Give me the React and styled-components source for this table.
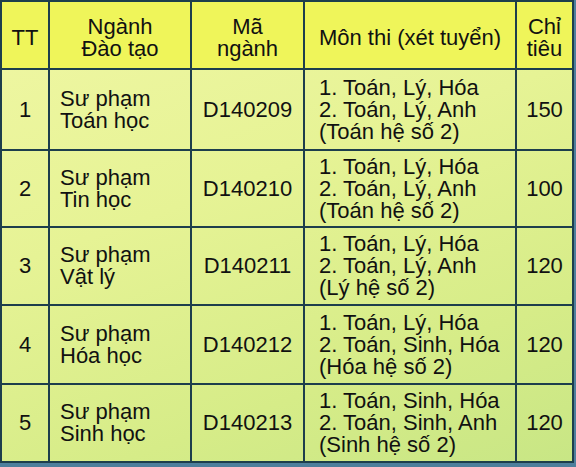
import React from "react";
import styled, { createGlobalStyle } from "styled-components";

const rows = [
  { tt: "1", nganh: ["Sư phạm", "Toán học"], ma: "D140209", mon: ["1. Toán, Lý, Hóa", "2. Toán, Lý, Anh", "(Toán hệ số 2)"], chi: "150" },
  { tt: "2", nganh: ["Sư phạm", "Tin học"], ma: "D140210", mon: ["1. Toán, Lý, Hóa", "2. Toán, Lý, Anh", "(Toán hệ số 2)"], chi: "100" },
  { tt: "3", nganh: ["Sư phạm", "Vật lý"], ma: "D140211", mon: ["1. Toán, Lý, Hóa", "2. Toán, Lý, Anh", "(Lý hệ số 2)"], chi: "120" },
  { tt: "4", nganh: ["Sư phạm", "Hóa học"], ma: "D140212", mon: ["1. Toán, Lý, Hóa", "2. Toán, Sinh, Hóa", "(Hóa hệ số 2)"], chi: "120" },
  { tt: "5", nganh: ["Sư phạm", "Sinh học"], ma: "D140213", mon: ["1. Toán, Sinh, Hóa", "2. Toán, Sinh, Anh", "(Sinh hệ số 2)"], chi: "120" },
];

const Lines = ({ lines }) => lines.map((l, i) => <span key={i}>{l}</span>);

const App = () => {
  return (
    <>
      <GlobalStyle />
      <Table>
        <HeadCell>TT</HeadCell>
        <HeadCell><Lines lines={["Ngành", "Đào tạo"]} /></HeadCell>
        <HeadCell><Lines lines={["Mã", "ngành"]} /></HeadCell>
        <HeadCell>Môn thi (xét tuyển)</HeadCell>
        <HeadCell><Lines lines={["Chỉ", "tiêu"]} /></HeadCell>
        {rows.map((r) => (
          <React.Fragment key={r.tt}>
            <Cell>{r.tt}</Cell>
            <Cell $left $pad={10}><Lines lines={r.nganh} /></Cell>
            <Cell>{r.ma}</Cell>
            <Cell $left $pad={14}><Lines lines={r.mon} /></Cell>
            <Cell>{r.chi}</Cell>
          </React.Fragment>
        ))}
      </Table>
    </>
  );
};

const GlobalStyle = createGlobalStyle`
  html, body {
    margin: 0;
    padding: 0;
    background: #4d7f9c;
  }
  body {
    font-family: "Liberation Sans", Arial, sans-serif;
  }
`;

const Table = styled.div`
  display: grid;
  grid-template-columns: 48px 142px 113px 212px 57px;
  grid-template-rows: 68px 81px 77px 78px 79px 78px;
  width: fit-content;
  border-top: 2px solid #1d3e4c;
  border-left: 2px solid #1d3e4c;
  background: linear-gradient(160deg, #f0f7a4 0%, #e6f395 40%, #d6ec88 75%, #c8e685 100%);
  font-size: 22px;
  line-height: 22px;
  color: #111;
`;

const Cell = styled.div`
  display: flex;
  flex-direction: column;
  justify-content: center;
  align-items: ${(p) => (p.$left ? "flex-start" : "center")};
  padding-left: ${(p) => p.$pad || 0}px;
  text-align: ${(p) => (p.$left ? "left" : "center")};
  border-right: 2px solid #1d3e4c;
  border-bottom: 2px solid #1d3e4c;
  white-space: nowrap;
`;

const HeadCell = styled(Cell)`
  background: #eff55a;
  padding-top: 6px;
`;

export default App;
